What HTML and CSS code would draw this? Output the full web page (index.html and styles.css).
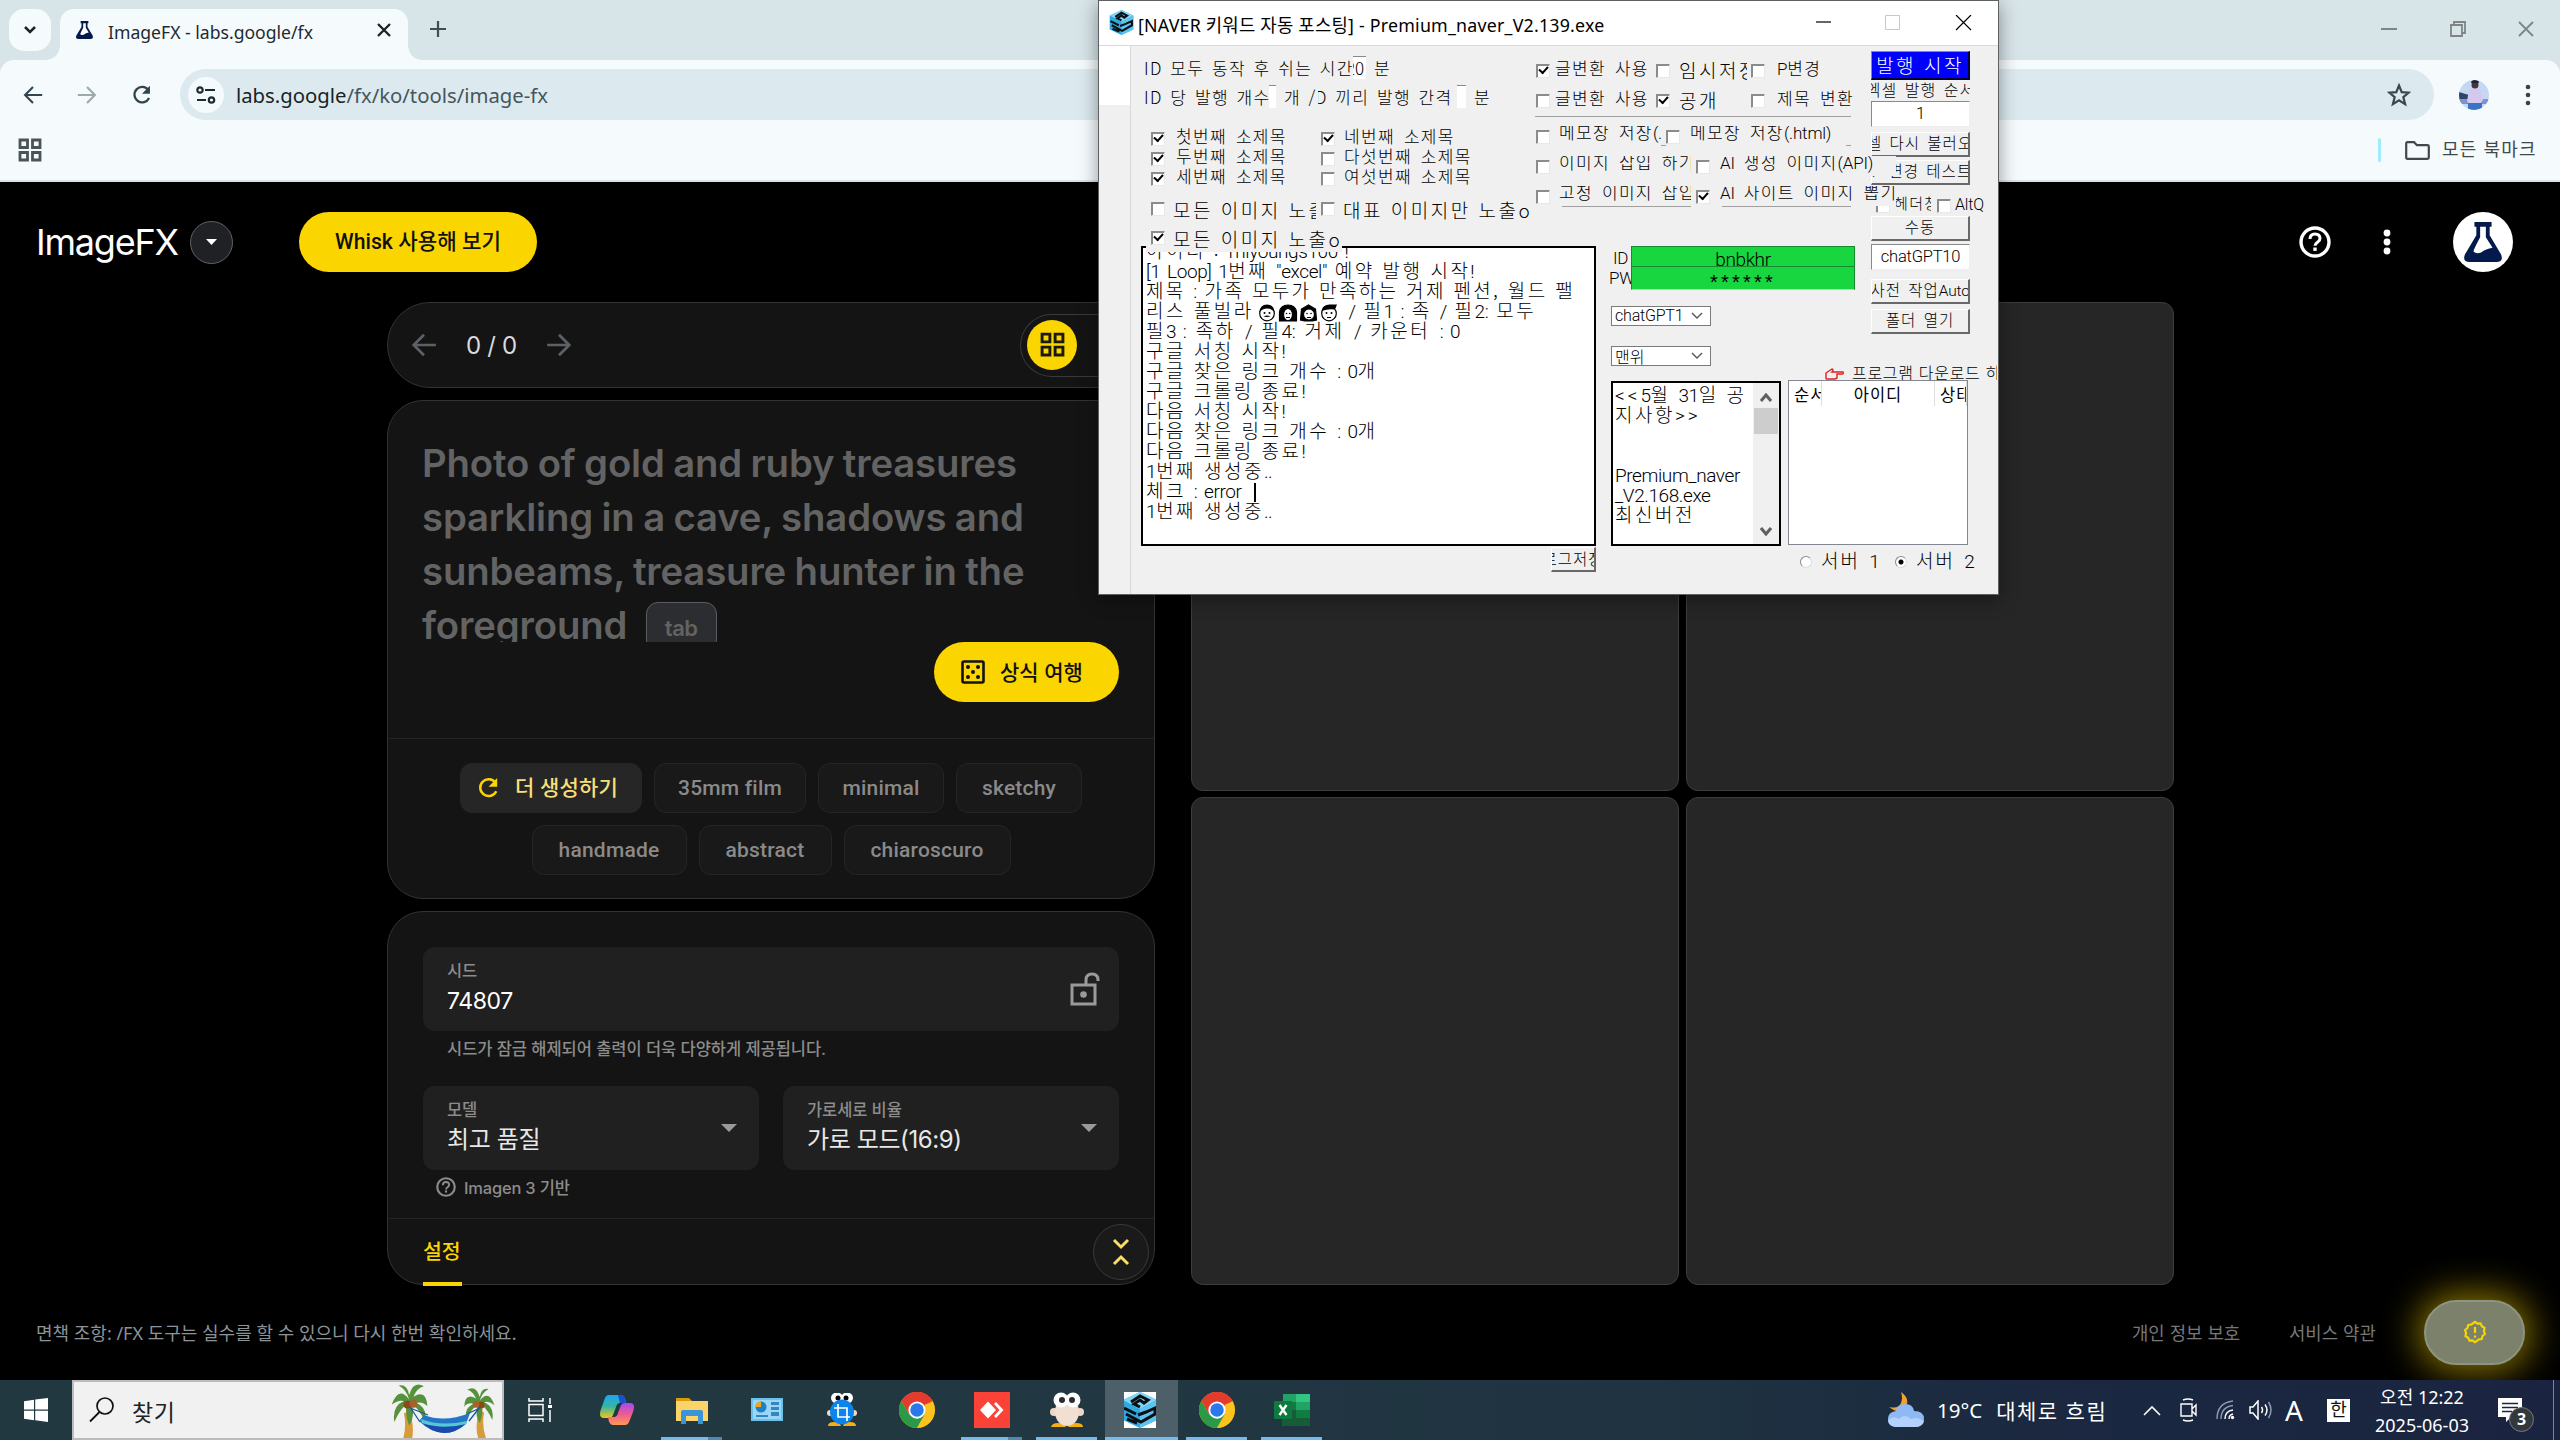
FILE: index.html
```html
<!DOCTYPE html>
<html lang="ko">
<head>
<meta charset="utf-8">
<title>ImageFX - labs.google/fx</title>
<link rel="stylesheet" href="styles.css">
</head>
<body>
<svg class="defs" width="0" height="0" aria-hidden="true">
  <symbol id="flask" viewBox="0 0 40 42">
    <path d="M11 0h18v5h-2v9l12 20q3 8-5 8H6q-8 0-5-8L13 14V5h-2z" fill="#041a4d"/>
    <path d="M17 5h6v11l7 11q-7 1-12 5-5 2-8-1 0-2 7-15z" fill="#fff"/>
  </symbol>
  <symbol id="chrome" viewBox="0 0 48 48">
    <circle cx="24" cy="24" r="24" fill="#fbbc05"/>
    <path d="M24 24 3.2 12A24 24 0 0 1 44.8 12z" fill="#e33b2e"/>
    <path d="M24 12h20.8A24 24 0 0 0 3.2 12L13.6 30z" fill="#e33b2e"/>
    <path d="M3.2 12A24 24 0 0 0 24 48L34.4 30 13.6 30z" fill="#2a9a48"/>
    <path d="M24 48 34.4 30A12 12 0 0 0 34 17L45 13A24 24 0 0 1 24 48z" fill="#fcc31e"/>
    <circle cx="24" cy="24" r="11.5" fill="#fff"/><circle cx="24" cy="24" r="9" fill="#2b78ec"/>
  </symbol>
  <symbol id="cube" viewBox="0 0 36 36">
    <path d="M18 0 35 8v20L18 36 1 28V8z" fill="#2fa9e0"/>
    <path d="M18 0 35 8 18 17 1 8z" fill="#7fd6f7"/>
    <path d="M18 17v19l17-8V8z" fill="#5cc4ef"/>
    <path d="M9 10 18 4l8 4-4 3-4-3-6 4 6 3M2 16l12 6M16 23l8-3 9-4v6l-14 8L4 22M5 27l10 4" fill="none" stroke="#0a0f14" stroke-width="3"/>
  </symbol>
  <symbol id="help" viewBox="0 0 32 32">
    <circle cx="16" cy="16" r="14" fill="none" stroke="currentColor" stroke-width="3.4"/>
    <path d="M11 13q0-5 5-5t5 4.500q0 2-2.500 3.800-2.500 1.800-2.500 3.500" fill="none" stroke="currentColor" stroke-width="3"/>
    <rect x="14.300" y="21.500" width="3.400" height="3.400" fill="currentColor"/>
  </symbol>
  <symbol id="grid4" viewBox="0 0 24 24">
    <path d="M2 2h7.500v7.500H2zM14.500 2H22v7.500h-7.500zM2 14.500h7.500V22H2zM14.500 14.500H22V22h-7.500z" fill="none" stroke="currentColor" stroke-width="2.800"/>
  </symbol>
  <symbol id="back" viewBox="0 0 24 24"><path d="M23 12H3M12 2.500 2.500 12l9.500 9.500" fill="none" stroke="currentColor" stroke-width="2.500"/></symbol>
  <symbol id="fwd" viewBox="0 0 24 24"><path d="M1 12h20M12 2.500l9.500 9.500-9.500 9.500" fill="none" stroke="currentColor" stroke-width="2.500"/></symbol>
  <symbol id="reload" viewBox="0 0 24 24"><path d="M20.500 15.500a9.200 9.200 0 1 1-1-9.500" fill="none" stroke="currentColor" stroke-width="2.700"/><path d="M21.500 1v9.500H12z" fill="currentColor"/></symbol>
  <symbol id="pal" viewBox="0 0 46 84">
    <path d="M22 34q10 24-3 50h-11q13-26 8-48z" fill="#d69c3a"/>
    <path d="M22 20Q10 4 2 26q8-6 14-4Q2 28 5 46q6-14 14-20-2 12 3 24 7-10 3-24 10 6 15 20 4-16-10-22 8-2 13 4Q42 8 27 17q4-10 12-12-12-7-17 10Q20 2 10 4q9 5 12 16z" fill="#56923c"/>
    <circle cx="20" cy="26" r="4.500" fill="#8a4a1c"/><circle cx="27" cy="25" r="4.500" fill="#a6622a"/>
  </symbol>
</svg>

<div class="desktop">
  <section class="browser">
    <div class="tabstrip">
      <div class="tabsearch"><svg width="12" height="8" viewBox="0 0 12 8"><path d="M1 1l5 5 5-5" fill="none" stroke="#1c2427" stroke-width="2.500"/></svg></div>
      <div class="tab">
        <svg width="19" height="18" preserveAspectRatio="none"><use href="#flask"/></svg>
        <span class="tabtitle">ImageFX - labs.google/fx</span>
        <svg class="tabx" width="14" height="14" viewBox="0 0 14 14"><path d="M1 1l12 12M13 1 1 13" stroke="#1c2427" stroke-width="2.400"/></svg>
      </div>
      <svg class="newtab" width="16" height="16" viewBox="0 0 16 16"><path d="M8 0v16M0 8h16" stroke="#3f4e4e" stroke-width="2.200"/></svg>
      <div class="wincontrols">
        <svg width="17" height="16" viewBox="0 0 17 16"><path d="M0 8h16" stroke="#7f8587" stroke-width="2"/></svg>
        <svg width="16" height="16" viewBox="0 0 16 16"><path d="M1 4h11v11H1zM4 4V1h11v11h-3" fill="none" stroke="#7f8587" stroke-width="1.800"/></svg>
        <svg width="16" height="16" viewBox="0 0 16 16"><path d="M1 1l14 14M15 1 1 15" stroke="#7f8587" stroke-width="1.800"/></svg>
      </div>
    </div>
    <div class="toolbar">
      <div class="navicons">
        <svg width="20" height="20"><use href="#back"/></svg>
        <svg class="dim" width="20" height="20"><use href="#fwd"/></svg>
        <svg width="22" height="20"><use href="#reload"/></svg>
      </div>
      <div class="omnibox">
        <div class="siteinfo"><svg width="20" height="18" viewBox="0 0 20 18"><g fill="none" stroke="#1d2b30" stroke-width="2.200"><circle cx="4" cy="4" r="2.700"/><path d="M9 4h10M1 14h9"/><circle cx="15.500" cy="14" r="2.700"/></g></svg></div>
        <span class="url">labs.google<i>/fx/ko/tools/image-fx</i></span>
        <svg class="star" width="24" height="24" viewBox="0 0 24 24"><path d="M12 2.500l2.700 6.600 7 .500-5.400 4.500 1.800 7L12 17.300 5.900 21.100l1.800-7L2.300 9.600l7-.500z" fill="none" stroke="#3b474b" stroke-width="2.200"/></svg>
      </div>
      <svg class="profile" width="30" height="30" viewBox="0 0 30 30"><clipPath id="pc"><circle cx="15" cy="15" r="15"/></clipPath><g clip-path="url(#pc)"><path d="M0 0h30v30H0z" fill="#c4d8f4"/><path d="M0 12l10 3v7H0z" fill="#2e4668"/><path d="M0 19h30v5H0z" fill="#7d93cf"/><path d="M10 10l6-2 6 2 2 10-3 4H10l-2-3z" fill="#d4c8ee"/><circle cx="16" cy="5" r="3.500" fill="#4a3236"/><path d="M12 3q0-3 4-3t4 3z" fill="#1d2236"/><path d="M9 23h14v7H9z" fill="#3b74c4"/></g></svg>
      <svg class="menu" width="6" height="24" viewBox="0 0 6 24"><g fill="#31464c"><circle cx="3" cy="4" r="2.300"/><circle cx="3" cy="12" r="2.300"/><circle cx="3" cy="20" r="2.300"/></g></svg>
    </div>
    <div class="bookmarks">
      <svg class="apps" width="24" height="24"><use href="#grid4"/></svg>
      <span class="bmdiv"></span>
      <svg width="25" height="19" viewBox="0 0 25 19"><path d="M2.500 1.200H9l3 3h10.500q1.300 0 1.300 1.300v11q0 1.300-1.300 1.300h-20q-1.300 0-1.300-1.300v-14q0-1.300 1.300-1.300z" fill="none" stroke="#41494c" stroke-width="2.200"/></svg>
      <span class="bmtext">모든 북마크</span>
    </div>

    <div class="page">
      <header class="fxhead">
        <span class="logo">ImageFX</span>
        <span class="drop"><svg width="11" height="6" viewBox="0 0 11 6"><path d="M0 0h11L5.500 6z" fill="#fff"/></svg></span>
        <span class="whisk">Whisk 사용해 보기</span>
        <div class="headright">
          <svg class="hq" width="32" height="32"><use href="#help"/></svg>
          <svg class="hm" width="8" height="26" viewBox="0 0 8 26"><g fill="#fff"><circle cx="4" cy="4" r="3.400"/><circle cx="4" cy="13" r="3.400"/><circle cx="4" cy="22" r="3.400"/></g></svg>
          <span class="avatar"><svg width="40" height="40"><use href="#flask"/></svg></span>
        </div>
      </header>
      <main class="fxmain">
        <div class="leftcol">
          <div class="pager">
            <svg width="26" height="26" viewBox="0 0 24 24"><use href="#back"/></svg>
            <span>0 / 0</span>
            <svg width="26" height="26" viewBox="0 0 24 24"><use href="#fwd"/></svg>
            <div class="toggle"><b><svg width="25" height="25"><use href="#grid4"/></svg></b></div>
          </div>
          <div class="panel prompt">
            <div class="promptbox">
              <div class="ghost">Photo of gold and ruby treasures<br>sparkling in a cave, shadows and<br>sunbeams, treasure hunter in the<br>foreground <kbd>tab</kbd></div>
              <div class="lucky"><svg width="24" height="24" viewBox="0 0 24 24"><rect x="1.500" y="1.500" width="21" height="21" rx="1.500" fill="none" stroke="#111" stroke-width="2.600"/><g fill="#111"><circle cx="7" cy="7" r="2"/><circle cx="17" cy="7" r="2"/><circle cx="12" cy="12" r="2"/><circle cx="7" cy="17" r="2"/><circle cx="17" cy="17" r="2"/></g></svg><span>상식 여행</span></div>
            </div>
            <div class="chips">
              <div class="chiprow">
                <span class="chip more"><svg width="23" height="22"><use href="#reload"/></svg>더 생성하기</span>
                <span class="chip c152">35mm film</span><span class="chip c126">minimal</span><span class="chip c126">sketchy</span>
              </div>
              <div class="chiprow">
                <span class="chip c155">handmade</span><span class="chip c133">abstract</span><span class="chip c167">chiaroscuro</span>
              </div>
            </div>
          </div>
          <div class="panel settings">
            <div class="field seed">
              <div><label>시드</label><p>74807</p></div>
              <svg width="30" height="34" viewBox="0 0 30 34"><path d="M2 13h23v19H2zM16 13V8q0-6 6-6t6 6v1" fill="none" stroke="#9a9a9a" stroke-width="3"/><circle cx="13.500" cy="22.500" r="3.300" fill="#9a9a9a"/></svg>
            </div>
            <div class="hint">시드가 잠금 해제되어 출력이 더욱 다양하게 제공됩니다.</div>
            <div class="selects">
              <div class="field"><div><label>모델</label><p>최고 품질</p></div><svg width="16" height="8" viewBox="0 0 16 8"><path d="M0 0h16L8 8z" fill="#9a9a9a"/></svg></div>
              <div class="field"><div><label>가로세로 비율</label><p>가로 모드(16:9)</p></div><svg width="16" height="8" viewBox="0 0 16 8"><path d="M0 0h16L8 8z" fill="#9a9a9a"/></svg></div>
            </div>
            <div class="based"><svg width="20" height="20"><use href="#help"/></svg>Imagen 3 기반</div>
            <div class="settingtab"><span>설정</span>
              <b><svg width="18" height="28" viewBox="0 0 18 28"><path d="M2 2l7 7 7-7M2 26l7-7 7 7" fill="none" stroke="#f8de62" stroke-width="3"/></svg></b></div>
          </div>
        </div>
        <div class="tiles"><i></i><i></i><i></i><i></i></div>
      </main>
      <footer class="fxfoot">
        <span class="disc">면책 조항: /FX 도구는 실수를 할 수 있으니 다시 한번 확인하세요.</span>
        <span class="priv">개인 정보 보호</span><span class="terms">서비스 약관</span>
        <div class="fab"><svg width="24" height="24" viewBox="0 0 24 24"><path d="M12 1.800l2.500 1.900 3.100-.3 1.200 2.900 2.700 1.600-.6 3.100 1 3-2.400 2-.8 3.100-3.100.4L13 21.700l-1 .5-2.500-1.900-3.100.3-1.200-2.900-2.700-1.600.6-3.100-1-3 2.400-2 .8-3.100 3.100-.4z" fill="none" stroke="#f7d500" stroke-width="2.200"/><path d="M12 7v6M12 15.500v2.300" stroke="#f7d500" stroke-width="2.200"/></svg></div>
      </footer>
    </div>
  </section>

  <section class="app">
    <div class="apptitle">
      <svg width="25" height="25"><use href="#cube"/></svg>
      <span>[NAVER 키워드 자동 포스팅] - Premium_naver_V2.139.exe</span>
      <svg class="ctl" width="170" height="16" viewBox="0 0 170 16"><path d="M0 7h15" stroke="#000" stroke-width="1.200"/><path d="M69.500.500h14v14h-14z" fill="none" stroke="#c8c8c8"/><path d="M140 0l15 15M155 0l-15 15" stroke="#000" stroke-width="1.200"/></svg>
    </div>
    <div class="appbody">
      <div class="strip"><i></i></div>
      <div class="form">
        <div class="optA">
          <div class="line l1"><span class="w209">ID 모두 동작 후 쉬는 시간</span><u class="w13">20</u><span class="g8">분</span></div>
          <div class="line l2"><span class="w125">ID 당 발행 개수</span><u class="w7"></u><span class="w34 g8">개 /</span><span class="w139 cut8">ID 끼리 발행 간격</span><u class="w9"></u><span class="g8">분</span></div>
          <div class="hr"></div>
          <div class="subs">
            <div class="ck on">첫번째 소제목</div><div class="ck on cut">네번째 소제목</div>
            <div class="ck on">두번째 소제목</div><div class="ck cut">다섯번째 소제목</div>
            <div class="ck on">세번째 소제목</div><div class="ck cut">여섯번째 소제목</div>
          </div>
          <div class="hr segs"><i></i><i></i><i></i></div>
          <div class="imgs big"><div class="ck">모든 이미지 노출o</div><div class="ck">대표 이미지만 노출o</div></div>
          <div class="imgs2 big"><div class="ck on">모든 이미지 노출o</div></div>
        </div>
        <div class="optB">
          <div class="r3 ra"><div class="ck on">글변환 사용</div><div class="ck big">임시저장</div><div class="ck"><em>P</em>변경</div></div>
          <div class="r3 rb"><div class="ck">글변환 사용</div><div class="ck on big">공개</div><div class="ck">제목 변환</div></div>
          <div class="hr"></div>
          <div class="r2 rc"><div class="ck cut">메모장 저장<em>(.txt)</em></div><div class="ck cut">메모장 저장<em>(.html)</em></div></div>
          <div class="hr in"></div>
          <div class="r2 rd"><div class="ck cut">이미지 삽입 하기</div><div class="ck cut"><em>AI</em> 생성 이미지<em>(API)</em></div></div>
          <div class="r2 rd"><div class="ck cut">고정 이미지 삽입</div><div class="ck on cut"><em>AI</em> 사이트 이미지 뽑기</div></div>
          <div class="hr two"><i></i><i></i></div>
        </div>
        <div class="optC">
          <div class="go big">발행 시작</div>
          <div class="lab"><span>엑셀 발행 순서</span></div>
          <div class="inp"><em>1</em></div>
          <div class="btn m5"><span>엑셀 다시 불러오기</span></div>
          <div class="btn m3"><span><em>IP</em> 변경 테스트</span></div>
          <div class="altrow"><div class="ck cut">헤더창</div><div class="ck"><em>AltQ</em></div></div>
          <div class="btn"><span>수동</span></div>
          <div class="inp m3"><em>chatGPT10</em></div>
          <div class="btn m9"><span>사전 작업<em>Auto</em></span></div>
          <div class="btn m5"><span>폴더 열기</span></div>
        </div>
        <div class="logcol">
          <div class="log big">
            <p>아이디 : <em>miyoungs100 !</em></p>
            <p><em>[1 Loop] 1</em>번째 <em>"excel"</em> 예약 발행 시작<em>!</em></p>
            <p class="t">제목 <em>:</em> 가족 모두가 만족하는 거제 펜션, 월드 팰</p>
            <p>리스 풀빌라<svg class="faces" width="80" height="18" viewBox="0 0 80 18"><g fill="#fff" stroke="#000" stroke-width="1.200"><circle cx="9" cy="9.500" r="7.300"/><path d="M21.500 17V8q1-7 8.500-7t8.500 7v9z" fill="#000"/><ellipse cx="30" cy="10.500" rx="4.500" ry="6"/><path d="M42.500 16l1-11 7-4 7 4 1 11-4 1h-8z" fill="#000"/><circle cx="51" cy="10.500" r="5.500"/><circle cx="71" cy="9.500" r="7.300"/></g><path d="M1.500 8q.5-7.500 7.500-7.500t7.500 7.500q-3-3.500-7.500-3.500T1.500 8zM63.500 7q1-6.500 8-6.500h7.500l-2 5q-7-1-13.500 1.500z"/><g><circle cx="6.500" cy="9" r="1"/><circle cx="11.500" cy="9" r="1"/><path d="M5.500 12.500q3.500-2 7 0l-3.500.6z"/><circle cx="28.500" cy="9.500" r=".8"/><circle cx="31.700" cy="9.500" r=".8"/><path d="M28 13h4v1h-4zM49 13h4v1h-4zM69 13h4v1h-4z"/><circle cx="49" cy="9.500" r=".8"/><circle cx="53" cy="9.500" r=".8"/><circle cx="68.500" cy="9" r="1"/><circle cx="73.500" cy="9" r="1"/></g></svg> <em>/</em> 필<em>1 :</em> 족 <em>/</em> 필<em>2:</em> 모두</p>
            <p class="w">필<em>3 :</em> 족하 <em>/</em> 필<em>4:</em> 거제 <em>/</em> 카운터 <em>: 0</em></p>
            <p>구글 서칭 시작<em>!</em></p>
            <p>구글 찾은 링크 개수 <em>: 0</em>개</p>
            <p>구글 크롤링 종료<em>!</em></p>
            <p>다음 서칭 시작<em>!</em></p>
            <p>다음 찾은 링크 개수 <em>: 0</em>개</p>
            <p>다음 크롤링 종료<em>!</em></p>
            <p><em>1</em>번째 생성중<em>..</em></p>
            <p>체크 <em>: error</em> <s></s></p>
            <p><em>1</em>번째 생성중<em>..</em></p>
          </div>
          <div class="btn logsave"><span>로그저장</span></div>
        </div>
        <div class="cred">
          <div class="credrow"><em>ID</em><b class="big"><em>bnbkhr</em></b></div>
          <div class="credrow"><em>PW</em><b>******</b></div>
          <div class="combo"><em>chatGPT1</em><svg width="12" height="7" viewBox="0 0 12 7"><path d="M1 1l5 5 5-5" fill="none" stroke="#555" stroke-width="1.400"/></svg></div>
          <div class="combo">맨위<svg width="12" height="7" viewBox="0 0 12 7"><path d="M1 1l5 5 5-5" fill="none" stroke="#555" stroke-width="1.400"/></svg></div>
        </div>
        <div class="noticecol"><div class="notice big">
          <div class="ntext"><p><em class="wide">&lt;&lt;</em><em>5</em>월 <em>31</em>일 공</p><p>지사항<em class="wide">&gt;&gt;</em></p><p></p><p></p><p><em>Premium_naver</em></p><p><em>_V2.168.exe</em></p><p>최신버전</p></div>
          <div class="sb"><svg width="12" height="9" viewBox="0 0 12 9"><path d="M1 8l5-6 5 6" fill="none" stroke="#606060" stroke-width="3"/></svg><i></i><svg width="12" height="9" viewBox="0 0 12 9"><path d="M1 1l5 6 5-6" fill="none" stroke="#606060" stroke-width="3"/></svg></div>
        </div></div>
        <div class="listcol">
          <div class="dl"><svg width="20" height="12" viewBox="0 0 20 12"><path d="M1 11V5l6-4q2 1 0 3h11q1 2-1 2h-5v4l-2 1H1" fill="none" stroke="#e02020" stroke-width="1.400"/></svg><span>프로그램 다운로드 하기</span></div>
          <div class="list"><span class="h1">순서</span><span class="h2">아이디</span><span class="h3">상태</span></div>
          <div class="radios big"><label><i></i>서버 <em>1</em></label><label><i class="sel"></i>서버 <em>2</em></label></div>
        </div>
      </div>
    </div>
  </section>

  <section class="taskbar">
    <div class="start"><svg width="24" height="24" viewBox="0 0 24 24"><path d="M0 3.300 10 1.800V11.500H0zM11.200 1.600 24 0v11.500H11.200zM0 12.700h10v9.600L0 20.800zM11.200 12.700H24V24l-12.800-1.800z" fill="#fff"/></svg></div>
    <div class="search">
      <svg width="26" height="26" viewBox="0 0 26 26"><circle cx="16" cy="9" r="8" fill="none" stroke="#111" stroke-width="1.700"/><path d="M10.500 15 1 24.500" stroke="#111" stroke-width="1.800"/></svg>
      <span>찾기</span>
      <svg class="palms" width="106" height="56" viewBox="0 0 106 56"><use href="#pal" x="0" y="0" width="40" height="73"/><use href="#pal" x="0" y="0" width="34" height="70" transform="translate(106 0) scale(-1 1)"/><path d="M20 25 30 40M20 26 38 33M90 25 79 39M90 26 77 32" stroke="#1b55a0" stroke-width="1.300"/><path d="M34 33q20 8 46-2l-4 11q-10 9-22 9-14-1-25-12z" fill="#2376c6"/><path d="M32 40q22 6 44 1-10 10-22 10-14-1-22-11z" fill="#1c49ac"/><path d="M31 37q20 8 46 2l-1 3q-23 6-44-1z" fill="#55c8d6"/></svg>
    </div>
    <div class="slot tv"><svg width="24" height="24" viewBox="0 0 24 24"><path d="M1 0v3h14V0M1 6.500h14v11H1zM1 24v-3h14v3M22 0v6M22 12v12" fill="none" stroke="#fff" stroke-width="1.500"/><path d="M20 7h4v3h-4z" fill="#fff"/></svg></div>
    <div class="slot"><svg width="34" height="32" viewBox="0 0 34 32"><defs><linearGradient id="c1" x2="0" y2="1"><stop stop-color="#20a4f3"/><stop offset=".5" stop-color="#35b5a0"/><stop offset="1" stop-color="#f6c419"/></linearGradient><linearGradient id="c2" x2="0" y2="1"><stop stop-color="#a04bf0"/><stop offset=".5" stop-color="#ef5a92"/><stop offset="1" stop-color="#ff9a50"/></linearGradient></defs><path d="M9 1h12q4 0 5 8h-6q-3 0-4 4l-3 8q-1 3-4 3H4q-6 0-3-9L5 4q1-3 4-3z" fill="url(#c1)"/><path d="M18 1h4q3 1 4 8h-6z" fill="#1a4fd0"/><path d="M25 31H13q-4 0-5-8h6q3 0 4-4l3-8q1-2 4-2h5q6 0 3 9l-4 10q-1 3-4 3z" fill="url(#c2)"/></svg></div>
    <div class="slot run run2"><svg width="32" height="28" viewBox="0 0 32 28"><path d="M0 2h13l3 3H0z" fill="#d99a10"/><path d="M0 5h32v20H0z" fill="#fbd368"/><path d="M5 28V16q0-2 2-2h18q2 0 2 2v12h-5v-8H10v8z" fill="#3c94d8"/></svg></div>
    <div class="slot"><svg width="32" height="24" viewBox="0 0 32 24"><rect width="32" height="23" fill="#6cc0ee"/><rect x="2" y="2" width="28" height="19" fill="#9ad6f6"/><circle cx="10" cy="9" r="5.500" fill="#1d83c9"/><path d="M10 9V3.500A5.500 5.500 0 0 0 4.500 9z" fill="#f4a41c"/><path d="M20 4h8v3h-8zM20 9h8v3h-8zM20 14h8v4h-8zM5 17h12v2H5z" fill="#3387bd"/></svg></div>
    <div class="slot"><svg width="30" height="34" viewBox="0 0 30 34"><ellipse cx="10" cy="5" rx="6" ry="5.500" fill="#fff"/><ellipse cx="20" cy="5" rx="6" ry="5.500" fill="#fff"/><circle cx="11" cy="5" r="2.500"/><circle cx="19" cy="5" r="2.500"/><path d="M1 33q0-4 6-4t7 4zM16 33q1-4 7-4t6 4z" fill="#f4b010"/><circle cx="3" cy="20" r="3" fill="#f3d9bd"/><circle cx="27" cy="20" r="3" fill="#f3d9bd"/><ellipse cx="15" cy="19" rx="12" ry="12.500" fill="#0b84ee"/><path d="M11 11v13h12M7 15h13v13" fill="none" stroke="#fff" stroke-width="1.700"/></svg></div>
    <div class="slot"><svg width="36" height="36"><use href="#chrome"/></svg></div>
    <div class="slot run run2"><svg width="36" height="36" viewBox="0 0 36 36"><path d="M0 0h36v36H0z" fill="#fb4237"/><path d="M14 9.500l8 8.500-8 8.500L6 18z" fill="#fff"/><path d="M20 12l2-2 7.500 8-7.500 8-2-2 5.500-6z" fill="#fff"/></svg></div>
    <div class="slot run"><svg width="34" height="36" viewBox="0 0 34 36"><path d="M1 35q1-4 7-4t8 4zM18 35q1-4 8-4t7 4z" fill="#f4b010"/><ellipse cx="4" cy="20" rx="4" ry="4" fill="#ecd6c4"/><ellipse cx="30" cy="20" rx="4" ry="4" fill="#ecd6c4"/><ellipse cx="17" cy="20" rx="12" ry="14" fill="#f1dfd1"/><ellipse cx="11" cy="8" rx="7.500" ry="7.500" fill="#fff"/><ellipse cx="23" cy="8" rx="7.500" ry="7.500" fill="#fff"/><circle cx="12" cy="8" r="3" fill="#2c2c30"/><circle cx="22" cy="8" r="3" fill="#2c2c30"/></svg></div>
    <div class="slot run active"><span class="cubebg"><svg width="32" height="36" viewBox="2 0 32 36"><use href="#cube" width="36" height="36"/></svg></span></div>
    <div class="slot run"><svg width="36" height="36"><use href="#chrome"/></svg></div>
    <div class="slot run"><svg width="36" height="34" viewBox="0 0 36 34"><path d="M9 1h13v10H9z" fill="#21a366"/><path d="M22 1h14v8H22z" fill="#33c481"/><path d="M8 9h14v8H8z" fill="#107c41"/><path d="M22 9h14v8H22z" fill="#21a366"/><path d="M8 17h14v8H8z" fill="#185c37"/><path d="M22 17h14v8H22z" fill="#107c41"/><path d="M8 25h28v8H8z" fill="#185c37"/><rect y="8" width="18" height="18" rx="1" fill="#0f7a40"/><path d="M5.500 12l7 10M12.500 12l-7 10" stroke="#fff" stroke-width="2.400"/></svg></div>
    <div class="tray">
      <svg class="wx" width="36" height="36" viewBox="0 0 36 36"><path d="M13 0q10 7 4 16-6 7-16-1 10 2 12-4 2-5 0-11z" fill="#f0a22e"/><path d="M8 35q-8-1-8-8t8-8q1-7 9-7t9 7q10 0 10 8t-9 8z" fill="#8fb9f5"/><path d="M8 35q-8-1-8-7 5-5 11-1 6-6 12 0 6-3 13 2-2 6-9 6z" fill="#b3d1fb"/></svg>
      <span class="temp">19°C<i>대체로 흐림</i></span>
      <svg class="t1" width="18" height="11" viewBox="0 0 18 11"><path d="M1 10l8-8 8 8" fill="none" stroke="#fff" stroke-width="1.600"/></svg>
      <svg class="t2" width="18" height="24" viewBox="0 0 18 24"><path d="M1 6h11v12H1zM12 11l4-4v10l-4-4M3 2q5-2 10 0M3 22q5 2 10 0" fill="none" stroke="#fff" stroke-width="1.400"/></svg>
      <svg class="t3" width="19" height="20" viewBox="0 0 19 20"><g fill="none" stroke="#8e9aae" stroke-width="1.400"><path d="M1 19Q1 3 17 1"/><path d="M5 19Q5 7 17 5.500"/></g><path d="M9 19q0-8 8-9M13 19q0-4 4-5" fill="none" stroke="#fff" stroke-width="1.400"/><circle cx="16.500" cy="17.500" r="1.700" fill="#fff"/></svg>
      <svg class="t4" width="24" height="20" viewBox="0 0 24 20"><path d="M1 7h3l5-6v18l-5-6H1zM12.500 7q2 3 0 6M16 4.500q4 5.500 0 11" fill="none" stroke="#fff" stroke-width="1.500"/><path d="M19.500 2q5 8 0 16" fill="none" stroke="#8e9aae" stroke-width="1.500"/></svg>
      <span class="ta">A</span>
      <span class="han">한</span>
      <span class="clock">오전 12:22<br>2025-06-03</span>
      <span class="noti"><svg width="24" height="28" viewBox="0 0 24 28"><path d="M0 0h24v19H13l-5 5v-5H0z" fill="#fff"/><path d="M4 5.500h16M4 9.500h16M4 13.500h10" stroke="#1b2740" stroke-width="1.400"/></svg><b>3</b></span>
      <i class="peek"></i>
    </div>
  </section>
</div>
</body>
</html>
```
FILE: styles.css
```css
* { box-sizing: border-box; }
body { margin: 0; background: #000; }
svg { display: block; flex: none; }
p { margin: 0; }
em, i { font-style: normal; }
.defs { position: absolute; }
.desktop { position: relative; width: 2560px; height: 1440px; overflow: hidden; display: flex; flex-direction: column; font-family: "Noto Sans", "Noto Sans CJK KR", sans-serif; }

/* browser chrome */
.browser { height: 1380px; display: flex; flex-direction: column; background: #d7e4e8; }
.tabstrip { height: 60px; display: flex; padding: 9px 26px 0 9px; }
.tabsearch { width: 42px; height: 42px; border-radius: 15px; background: #f5fafd; display: flex; align-items: center; justify-content: center; }
.tab { width: 348px; height: 51px; margin-left: 9px; border-radius: 14px 14px 0 0; background: #f5fafd; display: flex; align-items: center; padding: 0 17px 9px 15px; position: relative; }
.tab::before, .tab::after { content: ""; position: absolute; bottom: 0; width: 14px; height: 14px; }
.tab::before { left: -14px; background: radial-gradient(circle at 0 0, transparent 13.500px, #f5fafd 14px); }
.tab::after { right: -14px; background: radial-gradient(circle at 100% 0, transparent 13.500px, #f5fafd 14px); }
.tabtitle { margin-left: 14px; font-size: 17.600px; color: #1f2a2e; padding-top: 4px; line-height: 24px; white-space: nowrap; }
.tabx { margin-left: auto; }
.newtab { margin: 12px 0 0 22px; }
.wincontrols { margin-left: auto; display: flex; gap: 52px; padding-top: 12px; }
.toolbar { height: 66px; background: #f5fafd; border-radius: 14px 14px 0 0; display: flex; align-items: center; padding: 3px 29px 0 23px; }
.navicons { display: flex; gap: 34px; width: 157px; color: #31464c; }
.dim { opacity: .45; }
.omnibox { width: 2254px; height: 51px; border-radius: 26px; background: #dceaef; display: flex; align-items: center; padding: 0 23px 0 8px; }
.siteinfo { width: 36px; height: 36px; border-radius: 50%; background: #f5fafd; display: flex; align-items: center; justify-content: center; }
.url { margin-left: 12px; font-size: 20.300px; color: #16242a; white-space: nowrap; }
.url i { color: #46565c; }
.star { margin-left: auto; }
.profile { margin-left: 25px; }
.menu { margin-left: auto; }
.bookmarks { height: 54px; background: #f5fafd; display: flex; align-items: center; padding: 0 20px 6px 18px; color: #4a5458; }
.bmdiv { width: 3px; height: 24px; border-radius: 2px; background: #a0ecfc; margin: 0 24px 0 auto; }
.bmtext { margin-left: 12px; font-size: 18px; letter-spacing: 1.200px; color: #41494c; width: 98px; white-space: nowrap; line-height: 22px; padding-bottom: 2px; }
.page { margin-top: 2px; height: 1198px; background: #000; font-family: Inter, "Noto Sans CJK KR", sans-serif; }

/* page header */
.fxhead { height: 120px; display: flex; align-items: center; padding: 0 47px 0 36px; }
.logo { width: 154px; font-size: 36px; letter-spacing: -1.200px; color: #fff; white-space: nowrap; }
.drop { width: 43px; height: 43px; border: 1px solid #5f6368; border-radius: 50%; background: #202124; display: flex; align-items: center; justify-content: center; }
.whisk { margin-left: 66px; width: 238px; height: 60px; border-radius: 30px; background: #fbd500; color: #111; font: 500 21.200px/60px Roboto, "Noto Sans CJK KR", sans-serif; text-align: center; white-space: nowrap; }
.headright { margin-left: auto; display: flex; align-items: center; color: #fff; }
.hm { margin: 0 62px 0 52px; }
.avatar { width: 60px; height: 60px; border-radius: 50%; background: #fff; display: flex; align-items: center; justify-content: center; }

/* main columns */
.fxmain { display: flex; gap: 36px; padding-left: 387px; height: 983px; }
.leftcol { width: 768px; display: flex; flex-direction: column; }
.pager { height: 86px; border: 1px solid #333; border-radius: 43px; background: #141414; display: flex; align-items: center; padding-left: 23px; color: #5d6166; }
.pager > span { width: 109px; text-align: center; color: #d8dadd; font-size: 24px; letter-spacing: -.300px; }
.toggle { margin-left: auto; width: 134px; height: 63px; border: 1px solid #3a3a3a; border-right: 0; border-radius: 32px 0 0 32px; padding: 5px 6px; }
.toggle b { width: 50px; height: 50px; border-radius: 50%; background: #fbd500; color: #1c1a08; display: flex; align-items: center; justify-content: center; }
.panel { border: 1.500px solid #333; border-radius: 36px; background: #141414; }
.prompt { margin-top: 12px; height: 499px; }
.promptbox { height: 338px; border-bottom: 1px solid #232323; padding: 35px 35px 0 34px; }
.ghost { height: 206px; overflow: hidden; color: #636363; font-size: 38.300px; font-weight: 600; line-height: 54px; letter-spacing: -.150px; word-spacing: -1px; white-space: nowrap; }
.ghost kbd { display: inline-block; width: 71px; height: 50px; margin-left: 10px; border: 1px solid #5a5d60; border-radius: 12px; background: #2b2d30; font: 600 22px/50px Inter, sans-serif; letter-spacing: -.500px; text-align: center; vertical-align: 3px; }
.lucky { margin-left: auto; width: 185px; height: 60px; border-radius: 30px; background: #fbd500; display: flex; align-items: center; gap: 15px; padding-left: 27px; color: #111; font-size: 21px; font-weight: 500; white-space: nowrap; }
.lucky span { padding-bottom: 2px; }
.chips { padding-top: 24px; display: flex; flex-direction: column; gap: 12px; }
.chiprow { display: flex; justify-content: center; gap: 12px; }
.chip { height: 50px; border: 1px solid #252525; border-radius: 12px; background: #191919; color: #8a8a8a; font: 500 21px/48px Roboto, "Noto Sans CJK KR", sans-serif; letter-spacing: .2px; text-align: center; white-space: nowrap; }
.more { width: 182px; background: #262626; border-color: #262626; color: #f8de7a; display: flex; align-items: center; gap: 15px; padding-left: 16px; }
.more svg { color: #fbd500; }
.c126 { width: 126px; } .c133 { width: 133px; } .c152 { width: 152px; } .c155 { width: 155px; } .c167 { width: 167px; }

/* settings */
.settings { margin-top: 12px; height: 374px; padding: 35px 0 0 35px; }
.field { height: 84px; border-radius: 12px; background: #202020; display: flex; align-items: center; justify-content: space-between; padding: 0 22px 0 24px; color: #e8e8e8; white-space: nowrap; }
.field label { display: block; font-size: 16.500px; line-height: 24px; color: #8c8c8c; font-weight: 500; letter-spacing: -.1px; }
.field p { font-size: 24px; line-height: 36px; letter-spacing: -.400px; }
.seed { width: 696px; padding-right: 19px; }
.seed p { color: #fff; font-size: 23px; line-height: 37px; }
.hint { padding-left: 24px; height: 55px; font-size: 16.500px; font-weight: 500; line-height: 36px; color: #8c8c8c; letter-spacing: -.050px; white-space: nowrap; }
.selects { display: flex; gap: 24px; }
.selects .field { width: 336px; }
.based { height: 48px; padding: 0 0 15px 13px; display: flex; align-items: center; gap: 8px; color: #8c8c8c; font-size: 16.500px; font-weight: 500; letter-spacing: -.200px; }
.settingtab { margin-left: -35px; padding: 0 5px 0 35px; height: 67px; border-top: 1px solid #232323; display: flex; justify-content: space-between; }
.settingtab span { color: #fbd500; font-size: 20.500px; font-weight: 500; line-height: 65px; height: 67px; border-bottom: 4px solid #fbd500; width: 39px; white-space: nowrap; }
.settingtab b { width: 56px; height: 56px; margin-top: 5px; border: 1px solid #3a3a3a; border-radius: 50%; background: #1a1a1a; display: flex; align-items: center; justify-content: center; }
.tiles { display: grid; grid-template-columns: 488px 488px; grid-template-rows: 489px 488px; gap: 6px 7px; }
.tiles i { background: #262626; border: 1.500px solid #3d3d3d; border-radius: 12px; }

/* page footer */
.fxfoot { height: 95px; display: flex; align-items: center; padding: 0 35px 1px 36px; font-size: 18px; white-space: nowrap; color: #777; }
.fxfoot span { padding-bottom: 1px; }
.disc { color: #8b9398; font-family: "Noto Sans", "Noto Sans CJK KR", sans-serif; }
.priv { margin-left: auto; width: 157px; font-size: 17.800px; }
.terms { width: 135px; font-size: 17.800px; }
.fab { width: 101px; height: 65px; border: 2px solid #8d9484; border-radius: 33px; background: #7b816b; box-shadow: 0 0 36px 6px rgba(225, 190, 0, .62); display: flex; align-items: center; justify-content: center; }

/* automation tool window */
.app { position: absolute; left: 1098px; top: 0; width: 901px; height: 595px; border: 1px solid #5c6163; background: #f0f0f0; box-shadow: 0 4px 18px rgba(0, 0, 0, .4); display: flex; flex-direction: column; color: #000; }
.apptitle { height: 45px; background: #fff; border-bottom: 1px solid #d9d9d9; display: flex; align-items: center; padding-left: 10px; font-size: 17.800px; letter-spacing: .220px; white-space: nowrap; }
.apptitle svg:first-child { margin-top: -1px; }
.apptitle span { margin-left: 4px; padding-top: 1px; }
.ctl { margin: -1px 12px 0 auto; }
.appbody { flex: 1; display: flex; min-height: 0; overflow: hidden; font: 300 17px/20px "Noto Sans CJK KR", sans-serif; letter-spacing: 1.350px; word-spacing: 2.800px; white-space: nowrap; }
.appbody em { font-family: Roboto, sans-serif; font-weight: 300; letter-spacing: -.200px; word-spacing: 2px; }
.big { font-size: 19px; letter-spacing: 2.500px; word-spacing: 0; }
.appbody .big em { letter-spacing: -.400px; word-spacing: 2.500px; }
.appbody .big .wide { letter-spacing: 3px; }
.strip { width: 32px; border-right: 1px solid #d9d9d9; }
.strip i { display: block; height: 59px; background: #fff; }
.form { display: grid; grid-template-columns: 404px 61px 192px 83px 126px; grid-template-rows: 200px 134px 214px; }
.hr { height: 1px; background: #a0a0a0; }
.line { display: flex; height: 24px; line-height: 23px; padding-left: 13px; word-spacing: 1.500px; }
.line > * { flex: none; overflow: hidden; text-decoration: none; }
.line u { background: #fff; border-top: 1px solid #888; line-height: 22px; text-indent: -7px; letter-spacing: 0; }
.l1 { margin-top: 10px; } .l2 { margin-top: 6px; }
.w209 { width: 209px; } .w13 { width: 13px; } .w125 { width: 125px; } .w7 { width: 7px; } .w9 { width: 9px; }
.w34 { width: 34px; } .w139 { width: 139px; } .g8 { margin-left: 8px; } .cut8 { text-indent: -9px; }
.ck { position: relative; padding-left: 26px; overflow: hidden; line-height: 20px; background: #f0f0f0; }
.ck::before { content: ""; position: absolute; left: 0; top: 4px; width: 12px; height: 12px; background: #fff; border: 1px solid #8c8c8c; border-right-color: #e8e8e8; border-bottom-color: #e8e8e8; box-shadow: inset 1px 1px #8a8a8a; }
.ck.on::after { content: ""; position: absolute; left: 3px; top: 6px; width: 7px; height: 4px; border: solid #000; border-width: 0 0 2px 2px; transform: rotate(-48deg); }
.ck.cut { text-indent: -2px; }
.optA { grid-area: 1 / 1 / 2 / 2; z-index: 2; display: flex; flex-direction: column; }
.optA .hr { margin: 6px 0 0 10px; }
.subs { margin: 14px 0 0 20px; display: grid; grid-template-columns: 165px 200px; column-gap: 5px; grid-auto-rows: 20px; }
.subs .ck { line-height: 16px; padding-left: 25px; }
.optA .segs { margin-top: 0; background: none; display: flex; }
.segs i { background: #a0a0a0; }
.segs i:nth-child(1) { width: 5px; } .segs i:nth-child(2) { width: 139px; margin-left: 31px; } .segs i:nth-child(3) { width: 174px; margin-left: 31px; }
.imgs { margin: 10px 0 0 20px; display: flex; gap: 5px; height: 22px; }
.imgs .ck:first-child { width: 165px; }
.imgs .ck, .imgs2 .ck { padding-left: 22px; line-height: 23px; }
.imgs2 { margin: 4px 0 0 15px; width: 196px; height: 28px; flex: none; background: #f0f0f0; padding: 3px 0 0 5px; }
.optB { grid-area: 1 / 2 / 2 / 5; display: flex; flex-direction: column; z-index: 3; padding-left: 1px; }
.r3 { display: grid; grid-template-columns: 116px 91px 110px; column-gap: 4px; height: 20px; }
.ra { margin-top: 14px; } .rb { margin-top: 10px; }
.r3 .ck { line-height: 15px; } .r3 .big { line-height: 20px; padding-left: 23px; height: 24px; }
.r3 .ck:first-child { padding-left: 19px; }
.r3 .ck:last-child { padding-left: 26px; }
.optB .hr { margin: 6px 0 0 -1px; width: 316px; }
.r2 { display: grid; height: 20px; }
.r2 .ck { line-height: 12px; padding-left: 25px; }
.r2 .ck:last-child { padding-left: 26px; }
.rc { margin-top: 9px; grid-template-columns: 125px 180px; column-gap: 5px; }
.optB .in { margin: -1px 0 0 15px; width: 300px; }
.rd { margin-top: 10px; grid-template-columns: 155px 200px; column-gap: 5px; }
.optB .two { margin: 0 0 0 26px; width: 290px; background: none; display: flex; gap: 31px; }
.two i { width: 129px; background: #a0a0a0; }
.optC { grid-area: 1 / 5 / 3 / 6; display: flex; flex-direction: column; width: 99px; padding-top: 5px; z-index: 1; }
.go { height: 29px; background: #00f; color: #fff; border: 1px solid #7d7dff; border-right: 2px solid #003; border-bottom: 2px solid #003; text-align: center; line-height: 25px; }
.lab, .btn { display: flex; justify-content: center; overflow: hidden; font-size: 15.500px; letter-spacing: 1px; word-spacing: 2px; }
.lab { height: 21px; font-size: 16px; line-height: 19px; }
.lab span, .btn span { flex: none; }
.inp { height: 26px; background: #fff; border: 1px solid #8a8a8a; border-right-color: #eee; border-bottom-color: #eee; text-align: center; line-height: 21px; font-size: 16.500px; }
.btn { height: 25px; border: 1px solid #fff; border-right: 2px solid #696969; border-bottom: 2px solid #696969; background: #f0f0f0; line-height: 18px; flex: none; }
.m3 { margin-top: 3px; } .m5 { margin-top: 5px; } .m9 { margin-top: 9px; }
.altrow { height: 31px; display: flex; padding: 10px 0 0 5px; width: 120px; flex: none; }
.altrow .ck { flex: none; width: 55px; padding-left: 20px; font-size: 15px; line-height: 16px; }
.altrow .ck:last-child { margin-left: 6px; width: 56px; padding-left: 18px; font-size: 16px; }
.logcol { grid-area: 2 / 1 / 4 / 3; z-index: 1; padding-left: 10px; display: flex; flex-direction: column; align-items: flex-end; }
.log { width: 455px; height: 300px; flex: none; border: 2px solid #000; background: #fff; overflow: hidden; padding: 0 0 0 3px; }
.log p { height: 20px; line-height: 20px; position: relative; top: -8px; }
.log .t { letter-spacing: 2.350px; }
.log .w { word-spacing: 1.500px; }
.log .faces { display: inline-block; vertical-align: -4px; margin: 0 3px 0 4px; }
.log s { display: inline-block; width: 2px; height: 19px; background: #000; margin-left: 5px; vertical-align: -4px; }
.logsave { width: 45px; margin-top: 1px; line-height: 20px; }
.cred { grid-area: 2 / 3 / 3 / 5; padding-left: 13px; }
.credrow { display: flex; height: 20px; line-height: 24px; padding-left: 4px; }
.credrow + .credrow { height: 24px; padding-left: 0; }
.credrow > em { width: 18px; overflow: visible; }
.credrow + .credrow > em { width: 22px; }
.credrow b { position: relative; z-index: 1; width: 224px; background: #17d63f; border: 1px solid #168a30; border-bottom: 0; text-align: center; font-weight: 300; line-height: 21px; }
.credrow + .credrow b { font: 400 20px/30px "Liberation Sans", sans-serif; letter-spacing: 3.200px; border-bottom: 1px solid #7ff58f; }
.combo { margin: 16px 0 0 2px; width: 100px; height: 20px; border: 1px solid #7a7a7a; background: #fff; display: flex; align-items: center; justify-content: space-between; padding: 0 7px 1px 3px; font-size: 16px; letter-spacing: 0; }
.combo + .combo { margin-top: 20px; }
.noticecol { grid-area: 3 / 3 / 4 / 4; padding: 1px 0 0 15px; }
.notice { width: 170px; height: 165px; border: 2px solid #000; background: #fff; display: flex; justify-content: space-between; overflow: hidden; }
.ntext { padding: 1px 0 0 2px; width: 139px; overflow: hidden; }
.ntext p { height: 20px; line-height: 20px; }
.sb { width: 26px; background: #f0f0f0; display: flex; flex-direction: column; align-items: center; padding: 10px 0 8px; justify-content: space-between; }
.sb i { width: 24px; height: 26px; background: #cdcdcd; margin: 6px 0 auto; }
.listcol { grid-area: 3 / 4 / 4 / 6; display: flex; flex-direction: column; }
.dl { margin-top: -19px; height: 19px; padding-left: 37px; display: flex; align-items: flex-end; gap: 7px; overflow: hidden; font-size: 16px; letter-spacing: .700px; word-spacing: 0; }
.dl span { text-decoration: underline; line-height: 15px; }
.list { width: 180px; height: 165px; border: 1px solid #828790; background: #fff; display: grid; grid-template-columns: 33px 113px 32px; grid-template-rows: 25px; font: 400 16.500px/26px "Noto Sans CJK KR", sans-serif; letter-spacing: 1px; flex: none; }
.list span { border-right: 1px solid #ddd; overflow: hidden; text-align: center; }
.list .h1, .list .h3 { text-align: left; padding-left: 5px; }
.radios { display: flex; gap: 20px; padding: 5px 0 0 12px; letter-spacing: 2px; word-spacing: 2px; line-height: 20px; }
.radios label { display: block; width: 75px; }
.radios i { display: inline-block; width: 12px; height: 12px; margin-right: 9px; border-radius: 50%; background: #fff; border: 1px solid #8a8a8a; border-right-color: #dcdcdc; border-bottom-color: #dcdcdc; vertical-align: 0; }
.radios .sel { background: radial-gradient(circle, #000 2px, #fff 3px); }

/* taskbar */
.taskbar { height: 60px; display: flex; background: linear-gradient(90deg, #223841 0%, #213842 40%, #1f3340 65%, #1b2840 80%, #1a2440 100%); color: #fff; }
.start { width: 72px; display: flex; align-items: center; justify-content: center; }
.search { width: 432px; border: 2px solid #bcbcbc; background: #f1f1f1; color: #222; display: flex; align-items: center; padding-left: 15px; font-size: 23px; white-space: nowrap; }
.search span { margin-left: 17px; padding-top: 1px; letter-spacing: .5px; }
.palms { margin: 0 6px 0 auto; }
.slot { width: 75px; padding: 0 7px; display: flex; align-items: center; justify-content: center; position: relative; }
.tv { padding-right: 10px; }
.run::after { content: ""; position: absolute; left: 7px; right: 7px; bottom: 0; height: 3px; background: #76b9ed; }
.run2::after { background: linear-gradient(90deg, #76b9ed 77%, #5287b0 77%); }
.active { background: linear-gradient(#4d6069, #4d6069) center / 73px 100% no-repeat; }
.active::after { left: 1px; right: 1px; }
.cubebg { background: #fff; margin-right: 3px; }
.tray { margin-left: auto; display: flex; align-items: center; white-space: nowrap; }
.temp { width: 219px; padding-left: 13px; font-size: 20.500px; display: flex; align-items: center; gap: 14px; }
.temp i { font-size: 21px; letter-spacing: 1.500px; }
.t1 { margin-right: 19px; } .t2 { margin-right: 18px; } .t3 { margin-right: 14px; } .t4 { margin-right: 12px; }
.ta { width: 42px; font-size: 28px; }
.han { width: 23px; height: 23px; background: #fff; color: #111; font-size: 18px; line-height: 21px; text-align: center; }
.clock { width: 148px; text-align: center; font-size: 18px; line-height: 28px; padding: 2px 26px 0 22px; }
.noti { position: relative; width: 55px; height: 28px; margin-top: 4px; }
.noti b { position: absolute; left: 11px; top: 9px; width: 25px; height: 25px; border-radius: 50%; background: #33373e; border: 1px solid #777; font-size: 16px; line-height: 23px; text-align: center; }
.peek { width: 1px; height: 60px; background: #7c8497; margin-right: 6px; }
```
